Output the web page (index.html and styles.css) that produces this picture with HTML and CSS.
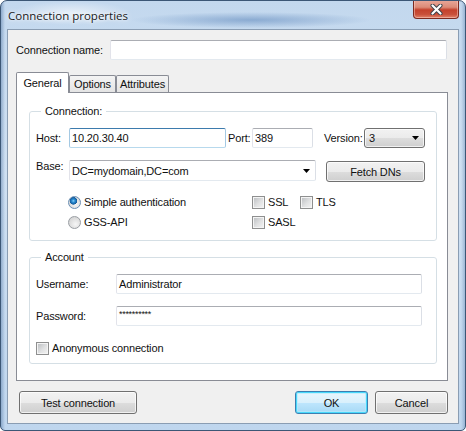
FILE: index.html
```html
<!DOCTYPE html>
<html lang="en">
<head>
    <meta charset="UTF-8">
    <title>Connection properties</title>
    <link rel="stylesheet" href="styles.css">
</head>
<body>
    <div class="window">
        <div class="titlebar">
            <span class="title">Connection properties</span>
            <div class="close-btn">
                <svg width="13" height="11" viewBox="0 0 13 11">
                    <path d="M2.5 1.5 L10.5 9.5 M10.5 1.5 L2.5 9.5" stroke="#3a3f47" stroke-width="4" stroke-linecap="round"/>
                    <path d="M2.5 1.5 L10.5 9.5 M10.5 1.5 L2.5 9.5" stroke="#fff" stroke-width="2.2" stroke-linecap="round"/>
                </svg>
            </div>
        </div>

        <div class="client">
            <div class="name-row">
                <span class="name-label">Connection name:</span>
                <div class="textbox name-input"></div>
            </div>

            <div class="tabs">
                <div class="tab tab-active tab-general">General</div>
                <div class="tab tab-options">Options</div>
                <div class="tab tab-attributes">Attributes</div>
            </div>

            <div class="tab-panel">
                <fieldset class="group group-connection">
                    <legend>Connection:</legend>
                    <div class="row">
                        <span class="lbl lbl-host">Host:</span>
                        <div class="textbox focused host-input">10.20.30.40</div>
                        <span class="lbl lbl-port">Port:</span>
                        <div class="textbox port-input">389</div>
                        <span class="lbl lbl-version">Version:</span>
                        <div class="dropdown version-select">
                            <span>3</span>
                            <svg width="7" height="4" viewBox="0 0 7 4"><path d="M0 0h7L3.5 4z" fill="#000"/></svg>
                        </div>
                    </div>
                    <div class="row row-base">
                        <span class="lbl lbl-host">Base:</span>
                        <div class="textbox combo base-combo">
                            <span>DC=mydomain,DC=com</span>
                            <svg width="7" height="4" viewBox="0 0 7 4"><path d="M0 0h7L3.5 4z" fill="#000"/></svg>
                        </div>
                        <div class="button fetch-btn">Fetch DNs</div>
                    </div>
                    <div class="options">
                        <div class="opt"><span class="radio checked"></span>Simple authentication</div>
                        <div class="opt"><span class="checkbox"></span>SSL</div>
                        <div class="opt"><span class="checkbox"></span>TLS</div>
                        <div class="opt"><span class="radio"></span>GSS-API</div>
                        <div class="opt"><span class="checkbox"></span>SASL</div>
                    </div>
                </fieldset>

                <fieldset class="group group-account">
                    <legend>Account</legend>
                    <div class="row">
                        <span class="lbl lbl-account">Username:</span>
                        <div class="textbox account-input">Administrator</div>
                    </div>
                    <div class="row row-password">
                        <span class="lbl lbl-account">Password:</span>
                        <div class="textbox account-input"><span class="stars">**********</span></div>
                    </div>
                    <div class="opt anon-row"><span class="checkbox"></span>Anonymous connection</div>
                </fieldset>
            </div>

            <div class="button-row">
                <div class="button test-btn">Test connection</div>
                <div class="button default-btn ok-btn">OK</div>
                <div class="button cancel-btn">Cancel</div>
            </div>
        </div>
    </div>
</body>
</html>
```

FILE: styles.css
```css
* {
    box-sizing: border-box;
}

body {
    margin: 0;
    font-family: "Liberation Sans", Arial, sans-serif;
    font-size: 11px;
    letter-spacing: -0.15px;
    color: #111;
    background: #fff;
}

/* window frame */

.window {
    width: 466px;
    height: 431px;
    border: 1px solid #3c5776;
    border-radius: 7px 7px 5px 5px;
    background:
        linear-gradient(to right, rgba(60, 100, 150, 0.4) 0, rgba(60, 100, 150, 0) 4px),
        linear-gradient(to left, rgba(60, 100, 150, 0.3) 0, rgba(60, 100, 150, 0) 4px),
        linear-gradient(to bottom, #c3d8ee 0, #cfe0f2 40%, #bfd6ee 100%);
    display: flex;
    flex-direction: column;
    overflow: hidden;
}

.titlebar {
    height: 28px;
    display: flex;
    padding-left: 7px;
    background:
        radial-gradient(ellipse 120px 8px at 250px 19px, rgba(100, 140, 190, 0.6), rgba(100, 140, 190, 0)),
        radial-gradient(ellipse 60px 12px at 70px 12px, rgba(255, 255, 255, 0.6), rgba(255, 255, 255, 0));
}

.title {
    align-self: center;
    margin-top: 1px;
    font-family: "Open Sans", "Noto Sans", sans-serif;
    font-size: 11.5px;
    letter-spacing: 0;
    color: #1b1b1b;
    text-shadow: 0 0 6px rgba(255, 255, 255, 0.95), 0 0 3px rgba(255, 255, 255, 0.9);
}

.close-btn {
    margin-left: auto;
    margin-right: 6px;
    width: 46px;
    height: 19px;
    margin-top: -1px;
    border: 1px solid #7c2a20;
    border-top: none;
    border-radius: 0 0 4px 4px;
    background: linear-gradient(to bottom, #e9a99b 0, #dc8b78 40%, #c4412c 55%, #c9503a 80%, #e2836a 100%);
    box-shadow: inset 0 0 0 1px rgba(255, 220, 210, 0.45);
    display: flex;
    align-items: center;
    justify-content: center;
}

.client {
    margin: 0 6px;
    height: 395px;
    border: 1px solid #8a9db3;
    background: #f0f0f0;
    padding: 10px 10px 8px 8px;
    display: flex;
    flex-direction: column;
}

/* connection name */

.name-row {
    display: flex;
    align-items: center;
    height: 20px;
}

.name-label {
    width: 94px;
}

.name-input {
    flex: 1;
    margin-right: 1px;
}

/* text boxes */

.textbox {
    height: 20px;
    border: 1px solid;
    border-color: #abadb3 #dbdfe6 #e3e9ef #e2e3ea;
    border-radius: 2px;
    background: #fff;
    padding: 0 2px;
    display: flex;
    align-items: center;
    white-space: nowrap;
}

.textbox.focused {
    border-color: #3d7bad #a4c9e3 #b7d9ed #a4c9e3;
}

.combo {
    justify-content: space-between;
    padding-right: 5px;
    height: 21px;
}

.stars {
    font-size: 9px;
    margin-top: -4px;
    letter-spacing: -0.3px;
}

/* tabs */

.tabs {
    display: flex;
    align-items: flex-end;
    margin-top: 12px;
    height: 20px;
}

.tab {
    height: 17px;
    border: 1px solid #898c95;
    border-bottom: none;
    background: linear-gradient(to bottom, #f4f4f4, #e4e4e4);
    display: flex;
    align-items: center;
    justify-content: center;
    border-radius: 2px 2px 0 0;
}

.tab-active {
    height: 21px;
    margin-bottom: -1px;
    background: #fff;
    position: relative;
    z-index: 1;
    padding-bottom: 1px;
}

.tab-general {
    width: 53px;
}

.tab-options {
    width: 47px;
}

.tab-attributes {
    width: 53px;
}

.tab-panel {
    height: 289px;
    border: 1px solid #898c95;
    background: #fff;
    padding-top: 12px;
}

/* group boxes */

.group {
    margin: 0 10px 0 12px;
    border: 1px solid #d5dfe5;
    border-radius: 3px;
    padding: 10px 0 8px 6px;
    min-inline-size: 0;
}

.group legend {
    margin-left: 5px;
    padding: 0 4px;
    line-height: 13px;
}

.group-account {
    margin-top: 10px;
    padding-bottom: 7px;
}

.row {
    display: flex;
    align-items: center;
    height: 20px;
}

.lbl-host {
    width: 33px;
}

.host-input {
    width: 157px;
}

.lbl-port {
    margin-left: 2px;
    width: 24px;
}

.port-input {
    width: 61px;
}

.lbl-version {
    margin-left: 11px;
    width: 40px;
}

.version-select {
    width: 61px;
}

.row-base {
    margin-top: 12px;
    height: 22px;
    align-items: flex-start;
}

.base-combo {
    width: 247px;
}

.fetch-btn {
    margin-left: 10px;
    margin-top: 1px;
    width: 99px;
    height: 21px;
}

.options {
    margin: 10px 0 0 32px;
    display: grid;
    grid-template-columns: 184px 48px auto;
    grid-auto-rows: 20px;
}

.opt {
    display: flex;
    align-items: center;
    white-space: nowrap;
}

.lbl-account {
    width: 80px;
}

.account-input {
    width: 306px;
}

.row-password {
    margin-top: 12px;
}

.anon-row {
    margin-top: 14px;
    height: 16px;
}

/* radio and check boxes */

.radio {
    width: 13px;
    height: 13px;
    margin-right: 3px;
    border-radius: 50%;
    border: 1px solid #9a9ea3;
    background: radial-gradient(circle at 60% 65%, #f6f6f6 0, #dcdcdc 60%, #c9cbcd 100%);
}

.radio.checked {
    border-color: #6b8fb4;
    background:
        radial-gradient(circle at 40% 35%, #8cd2fb 0, #2b8fd4 1.5px, #145a9b 3.5px, rgba(20, 90, 155, 0) 4px),
        radial-gradient(circle at 60% 65%, #f6f6f6 0, #dcdcdc 60%, #c9cbcd 100%);
}

.checkbox {
    width: 13px;
    height: 13px;
    margin-right: 3px;
    border: 1px solid #8e8f8f;
    background: linear-gradient(135deg, #b9bcbf 0, #e0e1e2 55%, #f4f4f4 100%);
    box-shadow: inset 0 0 0 1px #f4f4f4;
}

/* buttons */

.button,
.dropdown {
    border: 1px solid #707070;
    border-radius: 3px;
    background: linear-gradient(to bottom, #f2f2f2 0, #ebebeb 50%, #dddddd 51%, #cfcfcf 100%);
    box-shadow: inset 0 0 0 1px rgba(255, 255, 255, 0.7);
    display: flex;
    align-items: center;
    justify-content: center;
    white-space: nowrap;
}

.dropdown {
    height: 20px;
    justify-content: space-between;
    padding: 0 5px 0 4px;
}

.button-row {
    display: flex;
    margin-top: 10px;
    gap: 7px;
}

.button-row .button {
    height: 23px;
}

.test-btn {
    width: 118px;
    margin-left: 3px;
    margin-right: auto;
}

.ok-btn,
.cancel-btn {
    width: 73px;
}

.default-btn {
    border-color: #3c7fb1;
    background: linear-gradient(to bottom, #eaf6fd 0, #d9f0fc 50%, #bee6fd 51%, #a7d9f5 100%);
    box-shadow: inset 0 0 0 1px #48d8fb, inset 0 0 0 2px rgba(180, 235, 252, 0.6);
}
```
